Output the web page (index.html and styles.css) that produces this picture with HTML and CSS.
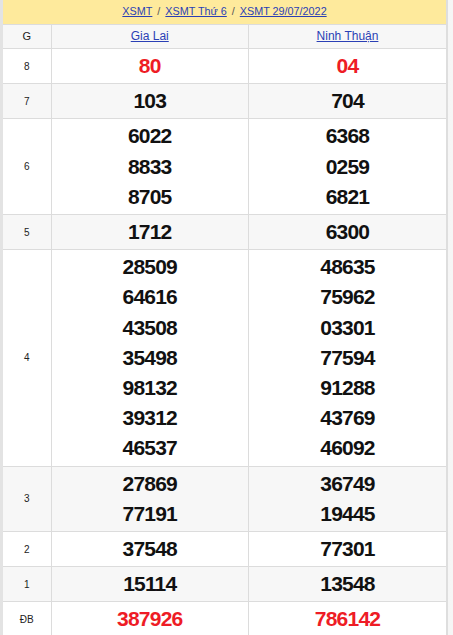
FILE: index.html
```html
<!DOCTYPE html>
<html lang="vi">
<head>
<meta charset="utf-8">
<link rel="stylesheet" href="styles.css">
</head>
<body>
<div class="frame">
  <div class="box">
    <div class="crumbs">
      <a href="#">XSMT</a><span class="sep">/</span><a href="#">XSMT Thứ 6</a><span class="sep">/</span><a href="#">XSMT 29/07/2022</a>
    </div>
    <table class="kq">
      <colgroup><col class="c-g"><col class="c-p"><col class="c-p"></colgroup>
      <tr class="head"><td class="g">G</td><td><a href="#">Gia Lai</a></td><td><a href="#">Ninh Thuận</a></td></tr>
      <tr><td class="g">8</td><td class="n red"><div>80</div></td><td class="n red"><div>04</div></td></tr>
      <tr class="alt"><td class="g">7</td><td class="n"><div>103</div></td><td class="n"><div>704</div></td></tr>
      <tr><td class="g">6</td><td class="n"><div>6022</div><div>8833</div><div>8705</div></td><td class="n"><div>6368</div><div>0259</div><div>6821</div></td></tr>
      <tr class="alt"><td class="g">5</td><td class="n"><div>1712</div></td><td class="n"><div>6300</div></td></tr>
      <tr><td class="g">4</td><td class="n"><div>28509</div><div>64616</div><div>43508</div><div>35498</div><div>98132</div><div>39312</div><div>46537</div></td><td class="n"><div>48635</div><div>75962</div><div>03301</div><div>77594</div><div>91288</div><div>43769</div><div>46092</div></td></tr>
      <tr class="alt"><td class="g">3</td><td class="n"><div>27869</div><div>77191</div></td><td class="n"><div>36749</div><div>19445</div></td></tr>
      <tr><td class="g">2</td><td class="n"><div>37548</div></td><td class="n"><div>77301</div></td></tr>
      <tr class="alt"><td class="g">1</td><td class="n"><div>15114</div></td><td class="n"><div>13548</div></td></tr>
      <tr><td class="g">ĐB</td><td class="n red"><div>387926</div></td><td class="n red"><div>786142</div></td></tr>
    </table>
  </div>
</div>
</body>
</html>
```
FILE: styles.css
```css
html, body {
  margin: 0;
  padding: 0;
  background: #fff;
}
body {
  font-family: "Liberation Sans", Arial, sans-serif;
  color: #222;
}
.frame {
  width: 453px;
  min-height: 635px;
  background: linear-gradient(to right, #ececec, #f6f6f6);
}
.box {
  width: 443px;
  min-height: 635px;
  background: #fff;
  border-left: 3px solid #e3e3e3;
  border-right: 2px solid #dedede;
}
.crumbs {
  background: #feea9c;
  height: 24px;
  line-height: 23px;
  text-align: center;
  font-size: 10.8px;
  color: #555;
}
.crumbs a {
  color: #2a3fb5;
  text-decoration: underline;
}
.crumbs .sep {
  margin: 0 5px;
  color: #555;
}
.kq {
  width: 443px;
  border-collapse: collapse;
  table-layout: fixed;
}
.c-g { width: 48px; }
.kq td {
  border: 1px solid #dcdcdc;
  text-align: center;
  vertical-align: middle;
  padding: 2px 0;
}
.kq td:first-child { border-left: 0; }
.kq td:last-child { border-right: 0; }
.head td {
  background: #f7f7f7;
  height: 20px;
  font-size: 12px;
  padding: 1px 0 2px;
}
.head a {
  color: #2a3fb5;
  text-decoration: underline;
}
.head .g {
  color: #222;
  font-size: 11px;
}
.alt td { background: #f7f7f7; }
.g {
  font-size: 10px;
  color: #222;
}
.n {
  font-family: "Liberation Sans", Arial, sans-serif;
  font-weight: bold;
  font-size: 21px;
  letter-spacing: -0.8px;
  color: #111;
}
.n div {
  line-height: 30.2px;
}
.kq .red { color: #ee1c25; }
```
